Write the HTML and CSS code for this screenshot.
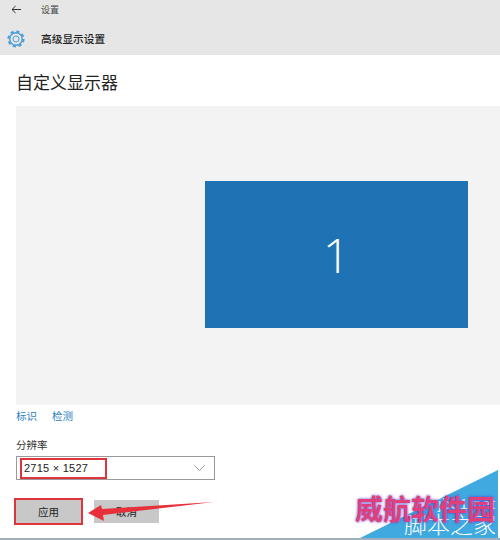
FILE: index.html
```html
<!DOCTYPE html>
<html lang="zh-CN">
<head>
    <meta charset="UTF-8">
    <meta name="viewport" content="width=device-width, initial-scale=1.0">
    <title>高级显示设置</title>
    <link rel="stylesheet" href="styles.css">
</head>
<body>

<header class="top">
    <div class="top-row">
        <svg class="back" width="10" height="9" viewBox="0 0 10 9"><path d="M10 4.5H1M4.6 1L1 4.5 4.6 8" fill="none" stroke="#333" stroke-width="1"/></svg>
        <span class="top-label">设置</span>
    </div>
    <div class="page-row">
        <svg class="gear" width="18" height="18" viewBox="0 0 18 18">
            <circle cx="9" cy="9" r="6.4" fill="none" stroke="#4d9fd8" stroke-width="1.1"/>
            <circle cx="9" cy="9" r="7.5" fill="none" stroke="#4d9fd8" stroke-width="2.2" stroke-dasharray="3.2 2.7"/>
            <circle cx="9" cy="9" r="6" fill="#e6e6e6"/>
            <circle cx="9" cy="9" r="6" fill="none" stroke="#4d9fd8" stroke-width="1"/>
            <circle cx="9" cy="9" r="3" fill="none" stroke="#4d9fd8" stroke-width="1"/>
        </svg>
        <span class="page-name">高级显示设置</span>
    </div>
</header>

<main class="content">
    <h1 class="title">自定义显示器</h1>

    <div class="canvas">
        <div class="monitor">1</div>
    </div>

    <div class="links">
        <a>标识</a>
        <a>检测</a>
    </div>

    <div class="field-label">分辨率</div>
    <div class="select">
        <span class="select-value">2715 × 1527</span>
        <svg class="chevron" width="11" height="6" viewBox="0 0 11 6"><path d="M.5.5l5 5 5-5" fill="none" stroke="#999" stroke-width="1"/></svg>
    </div>

    <div class="buttons">
        <button class="btn btn-marked">应用</button>
        <button class="btn">取消</button>
    </div>
</main>

<!-- red annotation arrow -->
<svg class="arrow" width="128" height="22" viewBox="0 0 128 22"><path d="M1 12L14 4l1 4L127 1 16 14l1 6z" fill="#e8303a"/></svg>

<!-- watermark corner -->
<div class="corner">
    <svg class="corner-bg" width="142" height="70" viewBox="0 0 142 70"><polygon points="0,69 140,0 140,69" fill="#3fa9e0"/></svg>
    <span class="wm-site">jb51.net</span>
    <span class="wm-name">脚本之家</span>
    <span class="wm-red">威航软件园</span>
</div>

</body>
</html>
```

FILE: styles.css
```css
* {
    box-sizing: border-box;
}

html, body {
    height: 540px;
    overflow: hidden;
}

body {
    position: relative;
    margin: 0;
    background-color: white;
    font-family: "Noto Sans CJK SC", "Liberation Sans", sans-serif;
    color: #222;
    border-bottom: 2px solid #9fb0bb;
}

.top {
    height: 55px;
    background-color: #e6e6e6;
    padding-left: 11px;
}

.top-row {
    display: flex;
    align-items: center;
    height: 19px;
}

.back {
    margin-right: 20px;
}

.top-label {
    font-size: 9px;
    color: #444;
}

.page-row {
    display: flex;
    align-items: center;
    height: 39px;
    margin-left: -4px;
}

.gear {
    margin-right: 16px;
}

.page-name {
    font-size: 10.7px;
    font-weight: 500;
}

.content {
    padding-left: 16px;
}

.title {
    margin: 0;
    height: 51px;
    line-height: 54px;
    font-size: 17px;
    font-weight: 400;
}

.canvas {
    display: flex;
    height: 299px;
    padding: 75px 32px 0 189px;
    background-color: #f3f3f3;
}

.monitor {
    flex: 1;
    height: 147px;
    background-color: #1f72b4;
    color: white;
    font-family: "Open Sans", "Liberation Sans", sans-serif;
    font-weight: 300;
    font-size: 48px;
    line-height: 147px;
    text-align: center;
}

.links {
    display: flex;
    gap: 15px;
    margin-top: 3px;
    font-size: 10.5px;
    line-height: 15px;
    color: #2a7fc0;
}

.field-label {
    margin-top: 14px;
    font-size: 10.5px;
    line-height: 15px;
    color: #333;
}

.select {
    display: flex;
    align-items: center;
    justify-content: space-between;
    width: 199px;
    height: 24px;
    margin-top: 4px;
    padding: 0 9px 0 3px;
    border: 1px solid #999;
}

.select-value {
    width: 87px;
    height: 21px;
    padding-left: 2px;
    border: 2px solid #e0343c;
    font-family: "Liberation Sans", sans-serif;
    font-size: 11px;
    letter-spacing: .25px;
    line-height: 17px;
    color: #222;
}

.buttons {
    display: flex;
    gap: 13px;
    margin-top: 20px;
}

.btn {
    width: 65px;
    height: 23px;
    padding: 0;
    background-color: #c8c8c8;
    border: none;
    font-family: inherit;
    font-size: 10.5px;
    color: #222;
}

.btn-marked {
    outline: 2px solid #e0343c;
}

.arrow {
    position: absolute;
    left: 87px;
    top: 501px;
}

.corner {
    position: absolute;
    left: 358px;
    top: 470px;
    width: 142px;
    height: 68px;
}

.corner-bg {
    display: block;
}

.wm-site {
    position: absolute;
    left: 80px;
    top: 26px;
    font-family: "Liberation Sans", sans-serif;
    font-size: 14px;
    letter-spacing: 1px;
    color: white;
    white-space: nowrap;
}

.wm-name {
    position: absolute;
    left: 46px;
    top: 38px;
    font-size: 23px;
    line-height: 30px;
    font-weight: 300;
    color: white;
    white-space: nowrap;
}

.wm-red {
    position: absolute;
    left: -3px;
    top: 20px;
    font-size: 28px;
    line-height: 36px;
    font-weight: 700;
    color: #e0407a;
    text-shadow: 0 0 3px #5a3ad0;
    white-space: nowrap;
}
```
